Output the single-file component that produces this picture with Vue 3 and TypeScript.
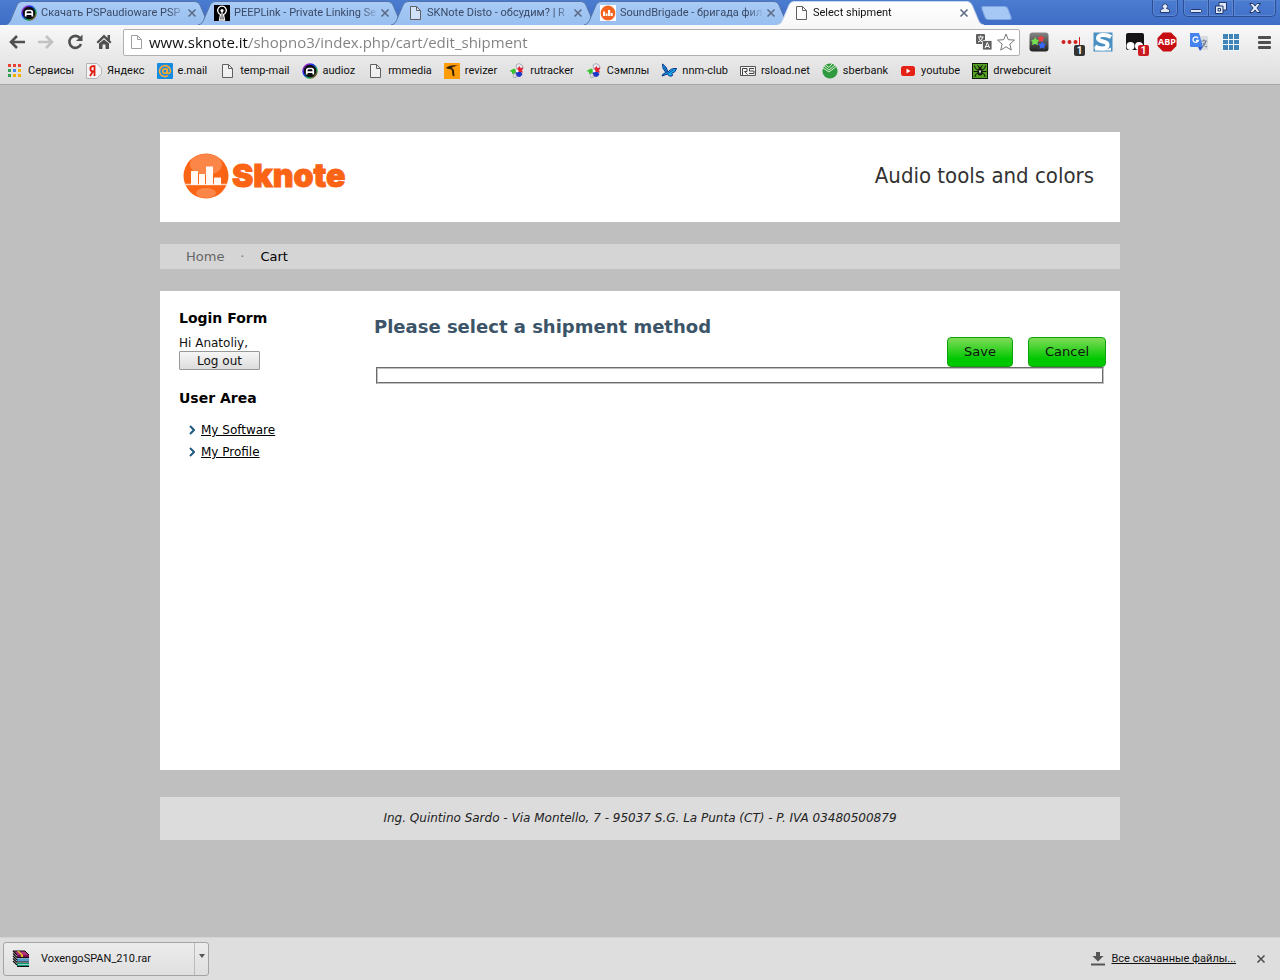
<script setup lang="ts">
import { ref } from 'vue'

interface Tab {
  title: string
  icon: string
}
interface Bookmark {
  label: string
  icon: string
}

const tabs: Tab[] = [
  { title: 'Скачать PSPaudioware PSP', icon: 'audioz' },
  { title: 'PEEPLink - Private Linking Se', icon: 'peep' },
  { title: 'SKNote Disto - обсудим? | R', icon: 'doc' },
  { title: 'SoundBrigade - бригада фил', icon: 'brigade' },
  { title: 'Select shipment', icon: 'doc' },
]
const activeTab = ref(4)

const bookmarks: Bookmark[] = [
  { label: 'Сервисы', icon: 'apps' },
  { label: 'Яндекс', icon: 'yandex' },
  { label: 'e.mail', icon: 'email' },
  { label: 'temp-mail', icon: 'doc' },
  { label: 'audioz', icon: 'audioz' },
  { label: 'rmmedia', icon: 'doc' },
  { label: 'revizer', icon: 'revizer' },
  { label: 'rutracker', icon: 'rutracker' },
  { label: 'Сэмплы', icon: 'rutracker' },
  { label: 'nnm-club', icon: 'butterfly' },
  { label: 'rsload.net', icon: 'rsload' },
  { label: 'sberbank', icon: 'sber' },
  { label: 'youtube', icon: 'youtube' },
  { label: 'drwebcureit', icon: 'spider' },
]

const extensions = [
  { name: 'Stars', icon: 'ext-stars' },
  { name: 'LastPass', icon: 'ext-dots', badge: '1', tone: 'dark' },
  { name: 'Stylish', icon: 'ext-s' },
  { name: 'Tampermonkey', icon: 'ext-monkey', badge: '1', tone: 'red' },
  { name: 'Adblock Plus', icon: 'ext-abp', text: 'ABP' },
  { name: 'Translate', icon: 'ext-translate' },
  { name: 'Speed dial', icon: 'ext-grid' },
]

const address = ref('www.sknote.it/shopno3/index.php/cart/edit_shipment')
</script>

<template>
  <svg class="sprite" aria-hidden="true">
    <defs>
      <linearGradient id="g-sky" x1="0" y1="0" x2="0" y2="1">
        <stop offset="0" stop-color="#a9cbf6" /><stop offset="1" stop-color="#98bff0" />
      </linearGradient>
      <linearGradient id="g-active" x1="0" y1="0" x2="0" y2="1">
        <stop offset="0" stop-color="#ffffff" /><stop offset="1" stop-color="#f8f8f8" />
      </linearGradient>
      <linearGradient id="g-ring" x1="0" y1="0" x2="1" y2="1">
        <stop offset="0" stop-color="#e0208a" /><stop offset=".35" stop-color="#1a2cff" />
        <stop offset=".7" stop-color="#12a040" /><stop offset="1" stop-color="#d02020" />
      </linearGradient>
      <linearGradient id="g-dark" x1="0" y1="0" x2="0" y2="1">
        <stop offset="0" stop-color="#888" /><stop offset="1" stop-color="#222" />
      </linearGradient>
    </defs>
    <symbol id="doc" viewBox="0 0 16 16">
      <path d="M3.5 1.5h6l4 4v9h-10z" fill="#fff" fill-opacity=".5" stroke="#606060" />
      <path d="M9.500 1.500v4h4" fill="none" stroke="#606060" />
    </symbol>
    <symbol id="audioz" viewBox="0 0 16 16">
      <circle cx="8" cy="8" r="7" fill="#0c0c12" stroke="url(#g-ring)" stroke-width="1.500" />
      <path d="M4.700 11.500V7.500a2 2 0 0 1 2-2h2.600a2 2 0 0 1 2 2v4M4.700 9.200h6.600" fill="none" stroke="#fff" stroke-width="1.700" />
    </symbol>
    <symbol id="peep" viewBox="0 0 16 16">
      <rect width="16" height="16" fill="#000" />
      <path d="M5.500 15 6.500 9.500A4.300 4.300 0 1 1 9.500 9.500L10.500 15z" fill="none" stroke="#fff" stroke-width="1.300" />
      <circle cx="8" cy="5.500" r="1.600" fill="#fff" /><path d="M7.400 6h1.200v8H7.400z" fill="#fff" />
    </symbol>
    <symbol id="brigade" viewBox="0 0 16 16">
      <rect width="16" height="16" fill="#fff" /><circle cx="8" cy="8" r="7.400" fill="#f4641e" />
      <path d="M3 11V6.500h2V11zM5.500 11V8.500h2V11zM8 11V5h2.200v6zM10.700 11V8h2v3z" fill="#fff" />
    </symbol>
    <symbol id="apps" viewBox="0 0 16 16">
      <path d="M1 1h3v3H1zM6 1h3v3H6zM11 1h3v3h-3z" fill="#ea4335" />
      <path d="M1 6h3v3H1z" fill="#34a04f" /><path d="M6 6h3v3H6z" fill="#4285f4" />
      <path d="M11 6h3v3h-3zM6 11h3v3H6zM11 11h3v3h-3z" fill="#f9b005" /><path d="M1 11h3v3H1z" fill="#34a04f" />
    </symbol>
    <symbol id="yandex" viewBox="0 0 16 16">
      <path d="M.500.500h10.500l4.500 5v5l-4.500 5H.500z" fill="#f4f4f4" stroke="#b4b4b4" />
      <path d="M8.500 13V3.200H7A2.500 2.500 0 0 0 7 8.500h1.500M6.800 8.500 4 13" fill="none" stroke="#e01b10" stroke-width="1.800" />
    </symbol>
    <symbol id="email" viewBox="0 0 16 16">
      <rect width="16" height="16" rx="1" fill="#168de2" />
      <circle cx="8" cy="8" r="2.300" fill="none" stroke="#ffa930" stroke-width="1.600" />
      <path d="M10.300 5.500V9q0 1.500 1.500 1.500Q13.500 10 13.500 8A5.500 5.500 0 1 0 11 12.700" fill="none" stroke="#ffa930" stroke-width="1.600" />
    </symbol>
    <symbol id="revizer" viewBox="0 0 16 16">
      <rect width="16" height="16" fill="#ff9c0a" />
      <path d="M2 4.500Q7 1.500 14 2.500 9 3.500 7.500 5 10 5.500 10 8.500L10.500 13.500 8.500 12.500 8 8Q8 6 5.500 6 3 6 2 4.500z" fill="#30200a" />
    </symbol>
    <symbol id="rutracker" viewBox="0 0 16 16">
      <path d="m7 2 3-1.500 3 1.500 1 3-4 2-2 0z" fill="#e8e8ee" stroke="#8a8a98" stroke-width=".6" />
      <path d="M5 5.500.500 8 3 9l0 2 3-.500 2-3z" fill="#36c22a" />
      <path d="m8 6 2.500-3 1 2 3-.500-1.500 3 1 2-4 0z" fill="#e02434" /><path d="m7 9 5 0 1.500 2.500-2.500 2.500-3-.500L6 12z" fill="#1c36c8" />
      <path d="m5 10 2 1 1 3-3 1-1-2z" fill="#d8dae2" stroke="#888" stroke-width=".5" /><circle cx="8" cy="8" r="1.400" fill="#fff" />
    </symbol>
    <symbol id="butterfly" viewBox="0 0 16 16">
      <path d="M1.500 1q4 2 5.500 8Q10 5 15.500 5.500 15 9 10.500 10.500q2 1 .5 2.500-3 1-4.500-2L1 13q.5-2.500 4-3.500Q1 6 1.500 1z" fill="#18b0f4" stroke="#0a2c80" />
      <path d="m3 4 3.500 6.500 6-3.500" fill="none" stroke="#0a2c80" stroke-width=".7" />
    </symbol>
    <symbol id="rsload" viewBox="0 0 16 16">
      <path d="M.500 3.500h15v9H.500z" fill="#f4f4f4" stroke="#555" />
      <path d="M2.500 12V5.500H7v3H4.500L7.500 11.500M14 5.500H9.500v2.500H14v2.500H9" fill="none" stroke="#444" />
    </symbol>
    <symbol id="sber" viewBox="0 0 16 16">
      <circle cx="8" cy="8" r="7.600" fill="#2f9a3e" />
      <path d="m1 5 6 4 8-6M2 3l5 4 6-5M4 2l3 2.500L10 1" fill="none" stroke="#d9f2d4" stroke-width="1" />
    </symbol>
    <symbol id="youtube" viewBox="0 0 16 16">
      <rect x="1" y="3" width="14" height="10" rx="2.500" fill="#e62117" /><path d="m6.500 5.500 4 2.500-4 2.500z" fill="#fff" />
    </symbol>
    <symbol id="spider" viewBox="0 0 16 16">
      <rect x=".5" y=".5" width="15" height="15" fill="#55a020" stroke="#0d1a06" />
      <ellipse cx="8" cy="9" rx="2.500" ry="3.500" fill="#10160c" /><circle cx="8" cy="5" r="1.500" fill="#10160c" />
      <path d="m2.500 2.500 1 3L6 7M13.500 2.500l-1 3L10 7M1.500 8.500H6M10 8.500h4.500M3 14l.500-2.500L6 10M13 14l-.5-2.500L10 10M5.500 2 7 4.500M10.500 2 9 4.500" stroke="#10160c" fill="none" />
      <path d="m6.800 7.500h2.400L8 11z" fill="#eee" />
    </symbol>
    <symbol id="ext-stars" viewBox="0 0 20 20">
      <rect x=".5" y=".5" width="19" height="19" rx="3" fill="url(#g-dark)" />
      <path d="m6 5 1.500 2.500L10 8 8.500 10.500 9 13l-3-1-3 1 .5-3L2 8l3-.5z" fill="#74e050" />
      <path d="m12 3 1 2 2.500.5L14 7.500v2.500l-2-1-2 1V7.500L8.500 5.500 11 5z" fill="#ee4040" />
      <path d="m13 9 1.200 2.500 3 .5-2 2 .3 3L13 15.500 10.500 17l.5-3-2-2 3-.5z" fill="#3868f8" />
    </symbol>
    <symbol id="ext-dots" viewBox="0 0 20 20">
      <g fill="#d22020"><circle cx="2.500" cy="10" r="2" /><circle cx="8.500" cy="10" r="2" /><circle cx="14.500" cy="10" r="2" /><path d="M18 5h1v9h-1z" /></g>
    </symbol>
    <symbol id="ext-s" viewBox="0 0 20 20">
      <rect x=".5" y=".5" width="19" height="19" fill="#4a90c2" />
      <path d="M2 14.500v4h16v-3l-4 2H8z" fill="#fff" />
      <path d="M18 5Q14 2.500 9.500 3 4.500 3.500 5 6.500q.5 2 5 3 5 1 4.500 4-.5 3-5.500 3-4 0-7-2" fill="none" stroke="#fff" stroke-width="4" />
    </symbol>
    <symbol id="ext-monkey" viewBox="0 0 20 20">
      <rect x="1" y="1" width="18" height="17" rx="2" fill="#161414" />
      <circle cx="5.500" cy="14" r="4" fill="#fff" /><circle cx="14" cy="14" r="4" fill="#fff" />
    </symbol>
    <symbol id="ext-abp" viewBox="0 0 20 20">
      <path d="M6 .500h8L19.500 6v8L14 19.500H6L.500 14V6z" fill="#c70d12" />
    </symbol>
    <symbol id="ext-translate" viewBox="0 0 20 20">
      <path d="M8 4h10a1 1 0 0 1 1 1v13H11z" fill="#d9dbde" /><path d="M1 1h9l4 14H2a1 1 0 0 1-1-1z" fill="#4482ee" />
      <path d="m9 15 5 0-3 4z" fill="#3058c0" /><path d="M9 6.200A2.700 2.700 0 1 0 9.300 8.500H7" fill="none" stroke="#fff" stroke-width="1.300" />
      <path d="M12.500 9H18M15 7.500V9M17 9q-1 4-4 6M14 11q1 3 4 4" fill="none" stroke="#6f7f95" stroke-width="1.200" />
    </symbol>
    <symbol id="ext-grid" viewBox="0 0 20 20">
      <rect x="1" y="1" width="18" height="18" fill="#eef4f8" />
      <path d="M2 2h5v5H2zM8 2h4v5H8zM13 2h5v5h-5zM2 8h5v4H2zM8 8h4v4H8zM13 8h5v4h-5zM2 13h5v5H2zM8 13h4v5H8zM13 13h5v5h-5z" fill="#4084b8" />
    </symbol>
    <symbol id="cross" viewBox="0 0 10 10">
      <path d="m1.500 1.500 7 7m0-7-7 7" fill="none" stroke="currentColor" stroke-width="1.600" />
    </symbol>
  </svg>

  <div class="window">
    <header class="browser">
      <div class="titlebar">
        <div class="tabs" role="tablist">
          <div v-for="(tab, i) in tabs" :key="i" class="tab" :class="{ active: i === activeTab }">
            <svg class="tab-shape" viewBox="0 0 207 25" preserveAspectRatio="none" aria-hidden="true">
              <path
                d="M0 25C4 24 5 22 6.500 18L12 5Q13.500 1.500 17 1.500H190Q193.500 1.500 195 5L200.500 18C202 22 203 24 207 25"
                :fill="i === activeTab ? 'url(#g-active)' : 'url(#g-sky)'"
                :stroke="i === activeTab ? '#c8d6ec' : '#5474a8'"
              />
            </svg>
            <button class="tab-title" role="tab" :aria-selected="i === activeTab" @click="activeTab = i">
              <svg class="icon" aria-hidden="true"><use :href="'#' + tab.icon" /></svg>
              <span>{{ tab.title }}</span>
            </button>
            <button class="tab-close" aria-label="Закрыть вкладку"><svg><use href="#cross" /></svg></button>
          </div>
        </div>
        <button class="new-tab" aria-label="Новая вкладка"></button>
        <div class="controls">
          <button class="control user" aria-label="Пользователь">
            <svg viewBox="0 0 12 12"><path d="M1.500 10.500V8.500q0-1.500 3-2a2.600 2.600 0 1 1 3 0q3 .5 3 2v2z" /></svg>
          </button>
          <div class="control-group">
            <button class="control" aria-label="Свернуть"><svg viewBox="0 0 12 12"><rect x=".5" y="7.500" width="11" height="3" rx="1" /></svg></button>
            <button class="control" aria-label="Восстановить">
              <svg viewBox="0 0 12 12"><path d="M4 .500h7.500V8H4z" /><path d="M.500 4H8v7.500H.500z" /><path d="M3 6.500h2.500V9H3z" /></svg>
            </button>
            <button class="control wide" aria-label="Закрыть">
              <svg viewBox="0 0 12 12"><path d="M.500 1.500H4l2 2.500 2-2.500h3.500L8 6l3.500 4.500H8L6 8l-2 2.500H.500L4 6z" /></svg>
            </button>
          </div>
        </div>
      </div>

      <div class="toolbar">
        <nav class="nav-buttons" aria-label="Навигация">
          <button aria-label="Назад"><svg viewBox="0 0 18 18"><path d="M17 9H3M9 3 3 9l6 6" fill="none" stroke="#505050" stroke-width="2.600" /></svg></button>
          <button aria-label="Вперёд"><svg viewBox="0 0 18 18"><path d="M1 9h14M9 3l6 6-6 6" fill="none" stroke="#c2c2c2" stroke-width="2.600" /></svg></button>
          <button aria-label="Обновить">
            <svg viewBox="0 0 18 18"><path d="M14 5A6 6 0 1 0 15 11" fill="none" stroke="#505050" stroke-width="2.600" /><path d="M16.500 1.500v6.500H10z" fill="#505050" /></svg>
          </button>
          <button aria-label="Домой">
            <svg viewBox="0 0 18 18"><path d="M9 1.500 1.500 9 3 10.500 9 5l6 5.500L16.500 9 15 7.500V2h-2.500v3zM4 10.500 9 6.500l5 4V16h-3.500v-4.500h-3V16H4z" fill="#505050" /></svg>
          </button>
        </nav>
        <div class="omnibox">
          <svg class="icon faded" aria-hidden="true"><use href="#doc" /></svg>
          <input v-model="address" type="text" aria-label="Адрес" spellcheck="false" />
          <button aria-label="Перевести страницу">
            <svg viewBox="0 0 18 18">
              <rect x="1" y="1" width="9" height="10" rx="1" fill="#606060" /><rect x="7.500" y="7.500" width="9.500" height="9.500" rx="1" fill="#606060" stroke="#fff" stroke-width=".8" />
              <path d="M3 4h5.500M5.700 2.500V4M8 4q-1 4-5 5M4 5q1 3 3 4" fill="none" stroke="#fff" /><path d="m10 15 2.300-5.500L14.600 15M10.700 13.500h3" fill="none" stroke="#fff" />
            </svg>
          </button>
          <button aria-label="Добавить в закладки">
            <svg viewBox="0 0 18 18"><path d="m9 1 2.300 5.700 6.200.400-4.700 4 1.500 6L9 13.800l-5.300 3.300 1.500-6-4.700-4 6.200-.400z" fill="#fff" stroke="#777" /></svg>
          </button>
        </div>
        <div class="extensions">
          <button v-for="ext in extensions" :key="ext.name" :aria-label="ext.name">
            <svg aria-hidden="true"><use :href="'#' + ext.icon" /></svg>
            <span v-if="ext.text" class="ext-text">{{ ext.text }}</span>
            <span v-if="ext.badge" class="badge" :class="ext.tone">{{ ext.badge }}</span>
          </button>
        </div>
        <button class="menu" aria-label="Меню"><i></i><i></i><i></i></button>
      </div>

      <nav class="bookmarks" aria-label="Закладки">
        <a v-for="mark in bookmarks" :key="mark.label" href="#">
          <svg class="icon" aria-hidden="true"><use :href="'#' + mark.icon" /></svg>{{ mark.label }}
        </a>
      </nav>
    </header>

    <div class="page">
      <header class="site-header">
        <a class="logo" href="#">
          <svg viewBox="0 0 46 46" aria-hidden="true">
            <circle cx="23" cy="23" r="22.500" fill="#fa6414" /><ellipse cx="23" cy="11.500" rx="16" ry="10.500" fill="#fc8648" />
            <ellipse cx="23" cy="40" rx="10" ry="5" fill="#fc8648" />
            <path d="M2 31.500h42" stroke="#fff" stroke-opacity=".7" stroke-width="1.500" />
            <path d="M8 32V18h7v14zM16 32V21h6v11zM23 32V13.500h7V32zM31 32v-7.500h7V32z" fill="#fff8f4" />
          </svg>
          <span>Sknote</span>
        </a>
        <p class="tagline">Audio tools and colors</p>
      </header>

      <nav class="crumbs" aria-label="Сайт">
        <a href="#">Home</a><span class="dot">·</span><a class="current" href="#">Cart</a>
      </nav>

      <main class="content">
        <aside>
          <h3>Login Form</h3>
          <form class="login" @submit.prevent>
            <div>Hi Anatoliy,</div>
            <button type="submit">Log out</button>
          </form>
          <h3>User Area</h3>
          <ul>
            <li v-for="item in ['My Software', 'My Profile']" :key="item">
              <svg viewBox="0 0 6 10" aria-hidden="true"><path d="m1 1 4 4-4 4" /></svg><a href="#">{{ item }}</a>
            </li>
          </ul>
        </aside>
        <section>
          <h1>Please select a shipment method</h1>
          <form @submit.prevent>
            <div class="actions">
              <button type="submit">Save</button>
              <button type="button">Cancel</button>
            </div>
            <fieldset aria-label="Shipment methods"></fieldset>
          </form>
        </section>
      </main>

      <footer class="site-footer">Ing. Quintino Sardo - Via Montello, 7 - 95037 S.G. La Punta (CT) - P. IVA 03480500879</footer>
    </div>

    <div class="downloads">
      <div class="download">
        <button class="file">
          <svg viewBox="0 0 18 18" aria-hidden="true">
            <path d="M1 1h12l4 4H5z" fill="#b0307c" /><path d="M5 5h12v2H5z" fill="#7c1050" />
            <path d="M5 8.500h12v3H5z" fill="#1c6cb8" /><path d="M5 13h12v3H5z" fill="#0c9868" />
            <path d="M1 1l4 4M1 3.500l4 4M1 6l4 4M1 8.500l4 4M1 11l4 4" stroke="#111" stroke-width="1.200" />
            <path d="M1 1h12l4 4M5 7.500h12M5 12h12M5 16.500h12" fill="none" stroke="#111" /><path d="M6 10h11M6 14.500h11" stroke="#8fd0d8" />
            <path d="M5 1h2l4 4v2H9V5z" fill="#e8c020" />
          </svg>
          VoxengoSPAN_210.rar
        </button>
        <button class="more" aria-label="Ещё"><svg viewBox="0 0 6 4"><path d="M0 0h6L3 4z" fill="#555" /></svg></button>
      </div>
      <div class="all-downloads">
        <svg viewBox="0 0 14 14" aria-hidden="true"><path d="M5 0h4v4h3.500L7 9.500 1.500 4H5zM0 11.500h14v2H0z" fill="#555" /></svg>
        <a href="#">Все скачанные файлы...</a>
        <button aria-label="Закрыть панель"><svg><use href="#cross" /></svg></button>
      </div>
    </div>
  </div>
</template>

<style>
body {
  margin: 0;
}
</style>

<style scoped>
* {
  box-sizing: border-box;
}
button {
  font: inherit;
  color: inherit;
  padding: 0;
  border: 0;
  background: none;
}
svg {
  display: block;
}
.sprite {
  position: absolute;
  width: 0;
  height: 0;
}
.icon {
  width: 16px;
  height: 16px;
  flex: none;
}
.window {
  display: flex;
  flex-direction: column;
  min-height: 100vh;
  background: #bfbfbf;
  font: 11px/16px Roboto, 'Noto Sans', sans-serif;
  color: #111;
}
.browser {
  border-bottom: 1px solid #a8a8a8;
  background: linear-gradient(#f8f8f8 25px, #dcdcdc);
}

.titlebar {
  display: flex;
  height: 25px;
  background: linear-gradient(#4a7cd0, #3f6dc6);
}
.tabs {
  display: flex;
  flex: 0 1 977px;
  min-width: 0;
  padding-left: 5px;
}
.tab {
  position: relative;
  display: flex;
  align-items: center;
  flex: 0 1 207px;
  min-width: 0;
  margin-right: -14px;
  padding: 0 11px 0 16px;
  color: #3a4a66;
}
.tab.active {
  z-index: 1;
  color: #111;
}
.tab-shape {
  position: absolute;
  inset: 0;
  width: 100%;
  height: 100%;
}
.tab-title {
  position: relative;
  display: flex;
  align-items: center;
  gap: 4px;
  flex: 1;
  min-width: 0;
}
.tab-title span {
  flex: 1;
  overflow: hidden;
  white-space: nowrap;
  text-align: left;
  mask-image: linear-gradient(90deg, #000 calc(100% - 16px), transparent);
}
.tab-close {
  position: relative;
  padding: 0 4px 0 2px;
  color: #5c6b84;
}
.tab-close svg,
.all-downloads button svg {
  width: 10px;
  height: 10px;
}
.new-tab {
  align-self: center;
  width: 27px;
  height: 14px;
  margin-left: 6px;
  border: 1px solid #7fa6e0;
  border-radius: 3px;
  background: #a5c8f5;
  transform: skewX(20deg);
}
.controls {
  display: flex;
  align-items: flex-start;
  gap: 6px;
  margin-left: auto;
  padding-right: 4px;
}
.control-group {
  display: flex;
}
.control {
  display: grid;
  place-items: center;
  width: 26px;
  height: 17px;
  margin-left: -1px;
  border: 1px solid #2a4f96;
  border-top: 0;
  box-shadow: inset 0 0 0 1px #5c86d2;
}
.control.user,
.control:first-child {
  border-bottom-left-radius: 5px;
}
.control.user,
.control.wide {
  border-bottom-right-radius: 5px;
}
.control.wide {
  width: 43px;
}
.control svg {
  width: 12px;
  height: 12px;
  fill: #dfe8f8;
  stroke: #22386a;
}

.toolbar {
  display: flex;
  align-items: center;
  height: 34px;
  padding: 0 6px 0 8px;
}
.nav-buttons {
  display: flex;
  gap: 11px;
  margin-right: 10px;
}
.nav-buttons svg,
.omnibox button svg {
  width: 18px;
  height: 18px;
}
.omnibox {
  display: flex;
  align-items: center;
  gap: 4px;
  flex: 1;
  min-width: 0;
  height: 27px;
  padding: 0 4px;
  border: 1px solid #b0b0b0;
  border-radius: 2px;
  background: #fff;
}
.faded {
  opacity: 0.6;
}
.omnibox input {
  flex: 1;
  min-width: 0;
  height: 24px;
  padding: 0 0 0 1px;
  border: 0;
  outline: 0;
  color: transparent;
  background: linear-gradient(90deg, #111 101px, #808080 101px);
  background-clip: text;
  font: 15px/24px 'Open Sans', 'Noto Sans', sans-serif;
}
.extensions {
  display: flex;
  gap: 12px;
  margin: 0 17px 0 9px;
}
.extensions button {
  position: relative;
}
.extensions svg {
  width: 20px;
  height: 20px;
}
.ext-text {
  position: absolute;
  inset: 0;
  font: bold 9px/20px 'Open Sans', sans-serif;
  text-align: center;
  color: #fff;
}
.badge {
  position: absolute;
  right: -4px;
  bottom: -4px;
  width: 11px;
  height: 11px;
  border-radius: 2px;
  font: bold 10px/11px Roboto, sans-serif;
  text-align: center;
  color: #fff;
}
.dark {
  background: #333;
}
.red {
  background: #cc1c22;
}
.menu {
  display: grid;
  gap: 2px;
  width: 13px;
  margin-right: 3px;
}
.menu i {
  height: 3px;
  border-radius: 1px;
  background: #505050;
}

.bookmarks {
  display: flex;
  align-items: center;
  gap: 12px;
  height: 25px;
  padding: 0 7px 2px;
  overflow: hidden;
}
.bookmarks a {
  display: flex;
  align-items: center;
  gap: 5px;
  flex: none;
  color: #111;
  text-decoration: none;
}

.page {
  display: flex;
  flex-direction: column;
  flex: 1;
  width: calc(100% - 40px);
  max-width: 960px;
  margin: 0 auto;
  padding: 47px 0 97px;
  font: 12px/16px Verdana, 'DejaVu Sans', sans-serif;
}
.site-header {
  display: flex;
  align-items: center;
  justify-content: space-between;
  height: 90px;
  padding: 0 26px 2px 23px;
  background: #fff;
}
.logo {
  display: flex;
  align-items: center;
  gap: 3px;
  color: #fa6414;
  text-decoration: none;
  font: 900 32px/40px Inter, 'Liberation Sans', sans-serif;
  -webkit-text-stroke: 1px #fa6414;
}
.logo svg {
  width: 46px;
  height: 46px;
}
.tagline {
  margin: 0;
  color: #333;
  font: 22px/28px 'DejaVu Sans Condensed', 'Open Sans', sans-serif;
}
.crumbs {
  display: flex;
  align-items: center;
  height: 25px;
  margin: 22px 0;
  padding: 0 26px;
  background: #d5d5d5;
  font-size: 13px;
}
.crumbs a {
  color: #666;
  text-decoration: none;
}
.crumbs .current {
  color: #000;
}
.dot {
  width: 36px;
  text-align: center;
  color: #777;
}
.content {
  display: grid;
  grid-template-columns: 180px minmax(0, 1fr);
  gap: 15px;
  flex: 1;
  padding: 18px 14px 18px 19px;
  background: #fff;
}
h3 {
  margin: 0 0 9px;
  font-size: 14px;
  line-height: 18px;
  color: #000;
}
.login {
  margin-bottom: 19px;
}
.login div {
  line-height: 15px;
}
.login button {
  width: 81px;
  height: 19px;
  border: 1px solid #999;
  border-radius: 1px;
  background: linear-gradient(#f6f6f6, #dcdcdc);
}
ul {
  margin: 0;
  padding: 3px 0 0 10px;
  list-style: none;
}
li {
  display: flex;
  align-items: center;
  gap: 6px;
  height: 22px;
}
li svg {
  width: 6px;
  height: 10px;
  fill: none;
  stroke: #1f5a80;
  stroke-width: 2;
}
li a {
  color: #000;
}
h1 {
  margin: 7px 0 0;
  font-size: 18px;
  line-height: 21px;
  color: #3c5468;
}
.actions {
  display: flex;
  justify-content: flex-end;
  gap: 15px;
}
.actions button {
  height: 30px;
  padding: 0 16px;
  border: 1px solid #0ba30b;
  border-radius: 4px;
  background: linear-gradient(#80dc58, #00c800 75%);
  font-size: 13px;
}
fieldset {
  height: 17px;
  margin: 0 2px;
  padding: 0;
  border: 2px groove #c0c0c0;
}
.site-footer {
  margin-top: 27px;
  padding: 14px;
  background: #dcdcdc;
  color: #222;
  text-align: center;
  font-size: 12px;
  font-style: italic;
  line-height: 15px;
}

.downloads {
  display: flex;
  align-items: center;
  justify-content: space-between;
  height: 43px;
  padding: 0 14px 0 3px;
  border-top: 1px solid #d4d4d4;
  background: #dedede;
}
.download {
  display: flex;
  height: 34px;
  border: 1px solid #a4a4a4;
  border-radius: 3px;
  background: linear-gradient(#ececec, #dfdfdf);
}
.file {
  display: flex;
  align-items: center;
  gap: 11px;
  width: 190px;
  padding-left: 8px;
}
.file svg {
  width: 18px;
  height: 18px;
}
.more {
  width: 14px;
  border-left: 1px solid #bbb;
}
.more svg {
  width: 6px;
  height: 4px;
  margin: 0 auto 6px;
}
.all-downloads {
  display: flex;
  align-items: center;
  gap: 6px;
}
.all-downloads > svg {
  width: 14px;
  height: 14px;
}
.all-downloads a {
  color: #111;
}
.all-downloads button {
  margin-left: 14px;
  color: #505050;
}
</style>
